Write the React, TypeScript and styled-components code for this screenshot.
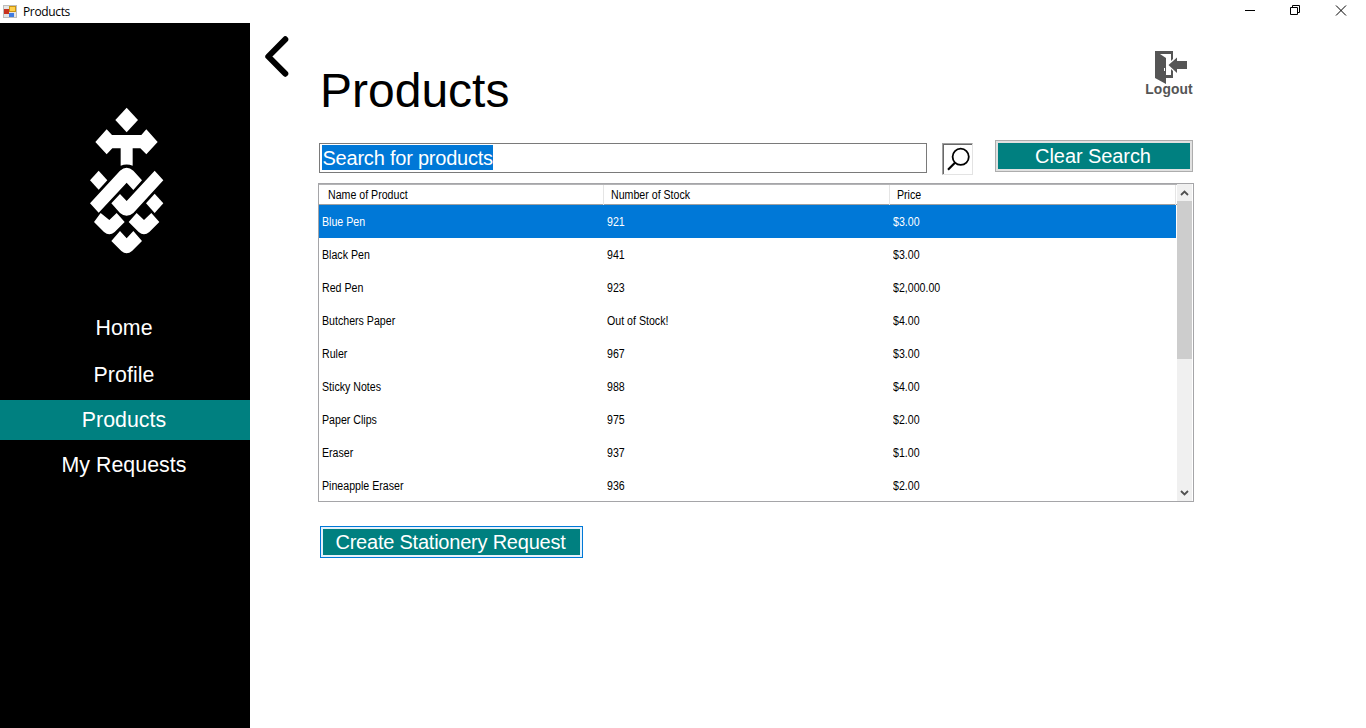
import React from 'react';
import styled, { createGlobalStyle, css } from 'styled-components';

const Global = createGlobalStyle`
  * { box-sizing: border-box; }
  body { margin: 0; background: #fff; overflow: hidden; font-family: "Liberation Sans", Arial, sans-serif; }
`;

const Window = styled.div`
  display: flex;
  flex-direction: column;
  width: 1366px;
  height: 728px;
  background: #fff;
`;

const TitleBar = styled.header`
  display: flex;
  align-items: center;
  height: 23px;
  padding-left: 3px;
  font: 12px/23px "Open Sans", "Noto Sans", sans-serif;
  letter-spacing: -0.35px;
`;

const WindowTitle = styled.span`
  flex: 1;
  margin-left: 6px;
`;

const WindowControls = styled.div`
  display: flex;
  svg { display: block; }
`;

const Body = styled.div`
  display: flex;
  flex: 1;
`;

const Sidebar = styled.nav`
  width: 250px;
  background: #000;
  padding-top: 77px;
  svg { display: block; margin-left: 76px; }
`;

const NavList = styled.div`
  display: flex;
  flex-direction: column;
  margin-top: 48px;
  gap: 5px;
`;

const NavItem = styled.a<{ $active?: boolean; $after?: number }>`
  height: 40px;
  padding-right: 2px;
  color: #fff;
  text-align: center;
  font-size: 21.33px;
  line-height: 40px;
  letter-spacing: 0.05px;
  margin-bottom: ${p => p.$after ?? 0}px;
  background: ${p => (p.$active ? '#008080' : 'transparent')};
`;

const Main = styled.main`
  display: flex;
  align-items: flex-start;
  flex: 1;
  padding: 12px 172px 0 13px;
`;

const BackButton = styled.div`
  width: 55px;
  svg { display: block; }
`;

const Content = styled.div`
  width: 876px;
`;

const PageHeader = styled.div`
  display: flex;
  justify-content: space-between;
  height: 105px;
`;

const Title = styled.h1`
  margin: 28px 0 0 2px;
  font-size: 48px;
  font-weight: 400;
  line-height: 55px;
`;

const Logout = styled.div`
  display: flex;
  flex-direction: column;
  align-items: center;
  width: 50px;
  padding-top: 15px;
  color: #555;
  font-size: 13.8px;
  font-weight: 700;
  line-height: 15px;
  svg { display: block; margin-left: 4px; }
  span { margin-top: -2px; letter-spacing: 0.1px; }
`;

const SearchRow = styled.div`
  display: flex;
  align-items: flex-start;
  height: 43px;
  padding-left: 1px;
`;

const SearchField = styled.div`
  width: 608px;
  height: 30px;
  margin-top: 3px;
  padding: 1px 2px;
  border: 1px solid #7a7a7a;
`;

const Selection = styled.span`
  display: block;
  width: 171px;
  height: 25px;
  color: #fff;
  background: #0078d7;
  font-size: 20px;
  line-height: 26px;
  letter-spacing: -0.22px;
  text-indent: 0.5px;
  white-space: nowrap;
`;

const SearchButton = styled.div`
  width: 31px;
  height: 32px;
  margin: 3px 22px 0 15px;
  border: 1px solid;
  border-color: #a0a0a0 #e3e3e3 #e3e3e3 #a0a0a0;
  box-shadow: inset 1px 1px #696969;
  svg { display: block; }
`;

const Button = styled.div<{ $width: number; $focused?: boolean; $spacing?: number }>`
  width: ${p => p.$width}px;
  height: 32px;
  padding: 2px;
  border: 1px solid ${p => (p.$focused ? '#0078d7' : '#adadad')};
  background: ${p => (p.$focused ? '#e5f1fb' : '#e1e1e1')};
  span {
    display: block;
    height: 26px;
    padding-right: 2px;
    color: #fff;
    background: #008080;
    font-size: 20px;
    line-height: 27px;
    letter-spacing: ${p => p.$spacing ?? 0}px;
    text-align: center;
    white-space: nowrap;
  }
`;

const Grid = styled.div`
  display: flex;
  width: 876px;
  height: 319px;
  border: 1px solid #a5a5a8;
  overflow: hidden;
  font-size: 12px;
`;

const Rows = styled.div`
  width: 858px;
`;

const columns = css`
  display: grid;
  grid-template-columns: 285px 286px 286px;
`;

const HeaderRow = styled.div`
  ${columns}
  height: 21px;
  border-top: 1px solid #b4b4b6;
  border-bottom: 1px solid #a0a0a0;
  line-height: 20px;
`;

const HeaderCell = styled.div`
  padding-left: 7px;
  border-right: 1px solid #e5e5e5;
  &:first-child { padding-left: 9px; }
`;

const Row = styled.div<{ $selected?: boolean }>`
  ${columns}
  width: 857px;
  height: 33px;
  line-height: 34px;
  color: ${p => (p.$selected ? '#fff' : '#000')};
  background: ${p => (p.$selected ? '#0078d7' : '#fff')};
`;

const Cell = styled.div`
  padding-left: 3px;
`;

const NarrowText = styled.span`
  display: inline-block;
  transform: scaleX(0.885);
  transform-origin: left center;
  white-space: nowrap;
`;

const ScrollBar = styled.div`
  display: flex;
  flex-direction: column;
  justify-content: space-between;
  width: 15px;
  height: 317px;
  background: #f0f0f0;
  svg { display: block; }
`;

const Thumb = styled.div`
  height: 158px;
  margin-bottom: auto;
  background: #cdcdcd;
`;

const Actions = styled.div`
  padding: 24px 0 0 2px;
`;

const products = [
  ['Blue Pen', '921', '$3.00'],
  ['Black Pen', '941', '$3.00'],
  ['Red Pen', '923', '$2,000.00'],
  ['Butchers Paper', 'Out of Stock!', '$4.00'],
  ['Ruler', '967', '$3.00'],
  ['Sticky Notes', '988', '$4.00'],
  ['Paper Clips', '975', '$2.00'],
  ['Eraser', '937', '$1.00'],
  ['Pineapple Eraser', '936', '$2.00'],
];

const AppIcon = () => (
  <svg width="14" height="15" viewBox="0 0 14 15">
    <rect x=".5" y="1.5" width="13" height="12" fill="#e4e4e4" stroke="#bdbdbd" />
    <rect x="6.5" y="2.5" width="6" height="5" fill="#ffd04a" stroke="#c99413" />
    <rect x="1" y="5" width="5" height="5" fill="#c8321f" />
    <rect x="6" y="9" width="5" height="4" fill="#3f7be0" />
  </svg>
);

const Logo = () => (
  <svg width="100" height="160" viewBox="0 0 300 480" fill="#fff">
    <path d="M152 23L186 60L152 97L118 60Z" />
    <path d="M92 88L108 105H196L211 88L245 126L211 163L193 145H170V197Q152 190 134 197V145H109L92 163L58 126Z" />
    <path d="M68 212L94 241L68 269L42 241Z" />
    <path d="M236 281L262 310L236 339L210 310Z" />
    <path d="M68 338L42 310L132 212Q152 194 172 212L198 241L172 270L152 248Z" />
    <path d="M236 212L262 241L172 339Q152 356 132 339L106 310L132 282L152 303Z" />
    <path d="M74 339L100 360L122 339L146 366L116 396Q100 410 84 396L54 366Z" />
    <path d="M182 339L204 360L226 339L250 366L220 396Q204 410 188 396L158 366Z" />
    <path d="M132 393L152 415L172 393L198 423L168 453Q152 467 136 453L106 423Z" />
  </svg>
);

export default function App() {
  return (
    <Window>
      <Global />
      <TitleBar>
        <AppIcon />
        <WindowTitle>Products</WindowTitle>
        <WindowControls>
          <svg width="126" height="23" fill="none" stroke="#000">
            <path d="M5 10.5H15" />
            <path d="M50.500 7.500H57.500V14.500H50.500ZM52.500 7V5.500H59.500V12.500H58" />
            <path d="M96 5.500L106 15.500M106 5.500L96 15.500" />
          </svg>
        </WindowControls>
      </TitleBar>
      <Body>
        <Sidebar>
          <Logo />
          <NavList>
            <NavItem $after={2}>Home</NavItem>
            <NavItem>Profile</NavItem>
            <NavItem $active>Products</NavItem>
            <NavItem>My Requests</NavItem>
          </NavList>
        </Sidebar>
        <Main>
          <BackButton>
            <svg width="30" height="44" fill="none" stroke="#000" strokeWidth="6" strokeLinecap="round" strokeLinejoin="round">
              <path d="M22.300 4.300L5.300 21.500L22.300 38.700" />
            </svg>
          </BackButton>
          <Content>
            <PageHeader>
              <Title>Products</Title>
              <Logout>
                <svg width="34" height="34" viewBox="0 0 34 34">
                  <path d="M1 1H19V9L17 11V4H6L12 8V25H17V19L19 21V28H12V34L1 28Z" fill="#555" />
                  <path d="M14.500 15L23 7.500V11H33V19H23V23Z" fill="#555" />
                  <path d="M10.500 18V21" stroke="#fff" />
                </svg>
                <span>Logout</span>
              </Logout>
            </PageHeader>
            <SearchRow>
              <SearchField><Selection>Search for products</Selection></SearchField>
              <SearchButton>
                <svg width="29" height="30" fill="none" stroke="#000">
                  <circle cx="17.700" cy="12.800" r="8.100" strokeWidth="1.800" />
                  <path d="M12.200 18.500L5 25.700" strokeWidth="2.200" />
                </svg>
              </SearchButton>
              <Button $width={198} $spacing={-0.08}><span>Clear Search</span></Button>
            </SearchRow>
            <Grid>
              <Rows>
                <HeaderRow>
                  {['Name of Product', 'Number of Stock', 'Price'].map(label => (
                    <HeaderCell key={label}><NarrowText>{label}</NarrowText></HeaderCell>
                  ))}
                </HeaderRow>
                {products.map((cells, i) => (
                  <Row key={cells[0]} $selected={i === 0}>
                    {cells.map((cell, j) => <Cell key={j}><NarrowText>{cell}</NarrowText></Cell>)}
                  </Row>
                ))}
              </Rows>
              <ScrollBar>
                <svg width="15" height="17" fill="none" stroke="#505050" strokeWidth="1.800"><path d="M4 11L7.500 7.500L11 11" /></svg>
                <Thumb />
                <svg width="15" height="17" fill="none" stroke="#505050" strokeWidth="1.800"><path d="M4 7L7.500 10.500L11 7" /></svg>
              </ScrollBar>
            </Grid>
            <Actions>
              <Button $width={263} $focused $spacing={-0.22}><span>Create Stationery Request</span></Button>
            </Actions>
          </Content>
        </Main>
      </Body>
    </Window>
  );
}
